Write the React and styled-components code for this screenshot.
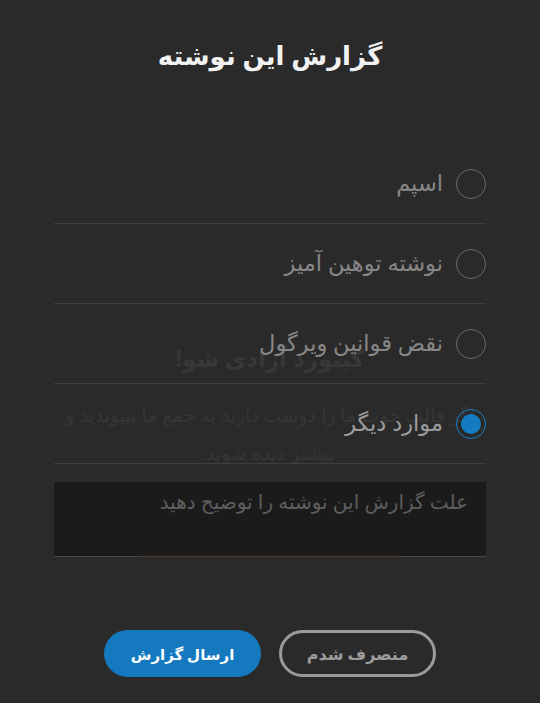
import React, { useState } from 'react';
import styled, { createGlobalStyle } from 'styled-components';

const Global = createGlobalStyle`
  html, body {
    margin: 0;
    background: #2a2a2a;
  }
  body {
    font-family: "Noto Sans", "DejaVu Sans", sans-serif;
  }
`;

const reasons = ['اسپم', 'نوشته توهین آمیز', 'نقض قوانین ویرگول', 'موارد دیگر'];

const App = () => {
    const [picked, setPicked] = useState(3);
    return (
        <Page dir="rtl">
            <Global />
            <Behind aria-hidden="true">
                <h2>کیبورد آزادی شو!</h2>
                <p>اگر قالب خوب ما را دوست دارید به جمع ما بپیوندید و بیشتر دیده شوید</p>
            </Behind>
            <Modal>
                <Title>گزارش این نوشته</Title>
                <List>
                    {reasons.map((r, i) => (
                        <Row key={r} onClick={() => setPicked(i)}>
                            <Radio $on={picked === i} />
                            <Label $on={picked === i}>{r}</Label>
                        </Row>
                    ))}
                </List>
                <NoteBox>
                    <Note placeholder="علت گزارش این نوشته را توضیح دهید" />
                </NoteBox>
                <Actions>
                    <Button $primary>ارسال گزارش</Button>
                    <Button>منصرف شدم</Button>
                </Actions>
            </Modal>
        </Page>
    );
};

export default App;

const Page = styled.div`
  position: relative;
  width: 540px;
  height: 703px;
  overflow: hidden;
  background: #2a2a2a;
`;

const Behind = styled.div`
  position: absolute;
  left: 50%;
  top: 336px;
  width: 420px;
  transform: translateX(-50%);
  text-align: center;
  color: #383838;
  h2 {
    margin: 0;
    font-size: 23px;
    font-weight: 700;
    line-height: 44px;
  }
  p {
    margin: 16px 0 0;
    font-size: 19px;
    line-height: 38px;
    color: #363636;
  }
`;

const Modal = styled.div`
  position: relative;
  z-index: 1;
  padding: 32px 54px 0;
  display: flex;
  flex-direction: column;
`;

const Title = styled.h1`
  margin: 0;
  text-align: center;
  color: #f2f2f2;
  font-size: 26px;
  font-weight: 700;
  line-height: 46px;
`;

const List = styled.div`
  margin-top: 66px;
  display: flex;
  flex-direction: column;
`;

const Row = styled.label`
  height: 79px;
  border-bottom: 1px solid #3e3e3e;
  display: flex;
  align-items: center;
  gap: 13px;
  cursor: pointer;
`;

const Radio = styled.span`
  flex: none;
  width: 30px;
  height: 30px;
  box-sizing: border-box;
  border-radius: 50%;
  border: ${p => (p.$on ? '1.5px solid #1a80c8' : '1.5px solid #6c6c6c')};
  display: flex;
  align-items: center;
  justify-content: center;
  &::after {
    content: '';
    width: 20px;
    height: 20px;
    border-radius: 50%;
    background: #157bc2;
    display: ${p => (p.$on ? 'block' : 'none')};
  }
`;

const Label = styled.span`
  font-size: 22.5px;
  margin-top: -3px;
  color: ${p => (p.$on ? '#9c9c9c' : '#878787')};
`;

const NoteBox = styled.div`
  position: relative;
  margin-top: 18px;
  display: flex;
  &::after {
    content: '';
    position: absolute;
    bottom: 0;
    left: 20%;
    right: 20%;
    height: 1px;
    background: #4d3a2c;
  }
`;

const Note = styled.textarea`
  flex: 1;
  height: 75px;
  box-sizing: border-box;
  padding: 5px 18px;
  background: #1b1b1b;
  border: none;
  border-bottom: 1px solid #4a4a4a;
  color: #ccc;
  font-family: inherit;
  font-size: 20px;
  line-height: 30px;
  resize: none;
  outline: none;
  &::placeholder {
    color: #5e5e5e;
  }
`;

const Actions = styled.div`
  margin-top: 73px;
  display: flex;
  flex-direction: row-reverse;
  justify-content: center;
  gap: 18px;
`;

const Button = styled.button`
  width: 157px;
  height: 47px;
  border-radius: 24px;
  font-family: inherit;
  font-size: ${p => (p.$primary ? '15px' : '16px')};
  font-weight: 700;
  cursor: pointer;
  background: ${p => (p.$primary ? '#1479bf' : 'transparent')};
  color: ${p => (p.$primary ? '#ffffff' : '#9c9c9c')};
  border: ${p => (p.$primary ? 'none' : '3px solid #9a9a9a')};
`;
